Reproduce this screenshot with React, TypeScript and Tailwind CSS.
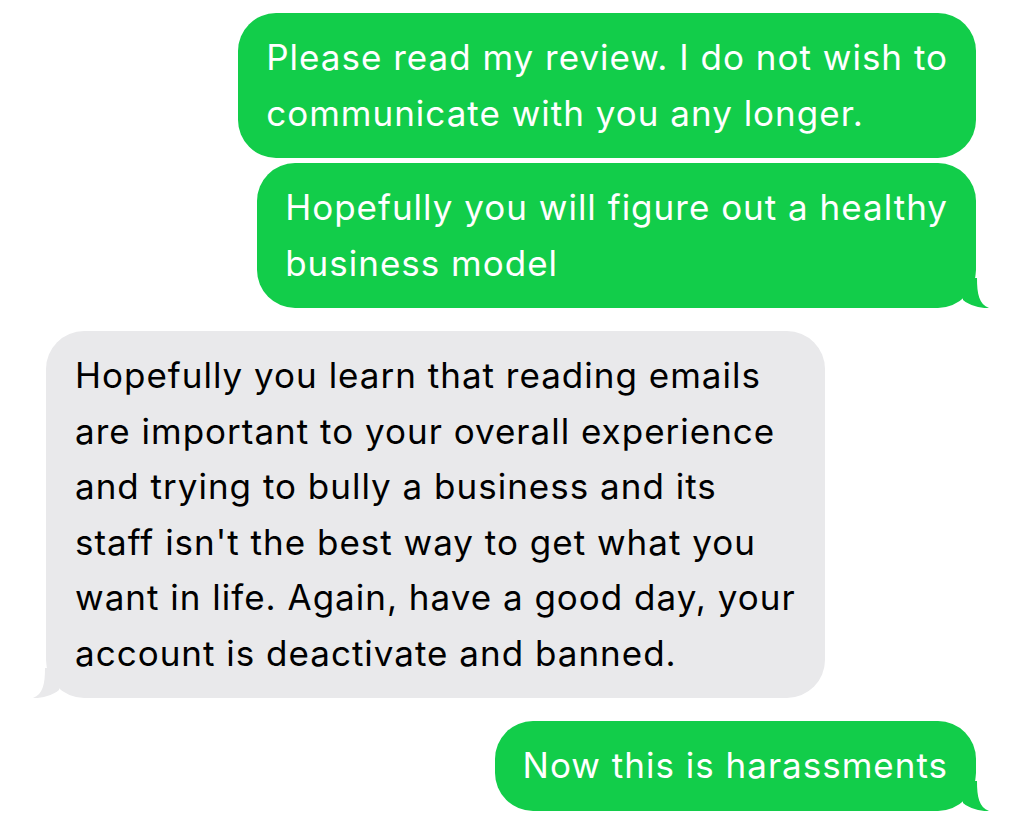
const GREEN = "bg-[#12cd4a]";

const Tail = ({ side, color }: { side: "left" | "right"; color: string }) => (
  <svg
    width="44"
    height="30"
    viewBox="0 0 44 30"
    className={
      side === "right"
        ? "absolute -right-[14px] bottom-0 overflow-visible"
        : "absolute -left-[14px] bottom-0 overflow-visible -scale-x-100"
    }
  >
    <path d="M17 0 L31 0 C31 16 33 26 43 30 C36 30.5 24 28 17 22 Z" fill={color} />
  </svg>
);

const Sent = ({ lines, tail, className = "" }: { lines: string[]; tail?: boolean; className?: string }) => (
  <div className={`relative self-end w-fit rounded-[38px] ${GREEN} px-[28px] py-[17px] text-white ${className}`}>
    {lines.map((l) => (
      <div key={l} className="whitespace-nowrap">
        {l}
      </div>
    ))}
    {tail && <Tail side="right" color="#12cd4a" />}
  </div>
);

export default function App() {
  return (
    <div
      className="w-[1024px] h-[827px] bg-white overflow-hidden flex flex-col pt-[13px] pl-[46px] pr-[48px] text-[35px] leading-[55.5px] tracking-[1px]"
      style={{ fontFamily: "Inter, 'Liberation Sans', sans-serif" }}
    >
      <Sent lines={["Please read my review. I do not wish to", "communicate with you any longer."]} />
      <Sent
        className="mt-[5px]"
        tail
        lines={["Hopefully you will figure out a healthy", "business model"]}
      />
      <div className="relative self-start w-fit mt-[23px] rounded-[38px] bg-[#e9e9eb] px-[29px] py-[17px] text-black">
        {[
          "Hopefully you learn that reading emails",
          "are important to your overall experience",
          "and trying to bully a business and its",
          "staff isn't the best way to get what you",
          "want in life. Again, have a good day, your",
          "account is deactivate and banned.",
        ].map((l) => (
          <div key={l} className="whitespace-nowrap">
            {l}
          </div>
        ))}
        <Tail side="left" color="#e9e9eb" />
      </div>
      <Sent className="mt-[23px] py-[16px]" tail lines={["Now this is harassments"]} />
    </div>
  );
}
